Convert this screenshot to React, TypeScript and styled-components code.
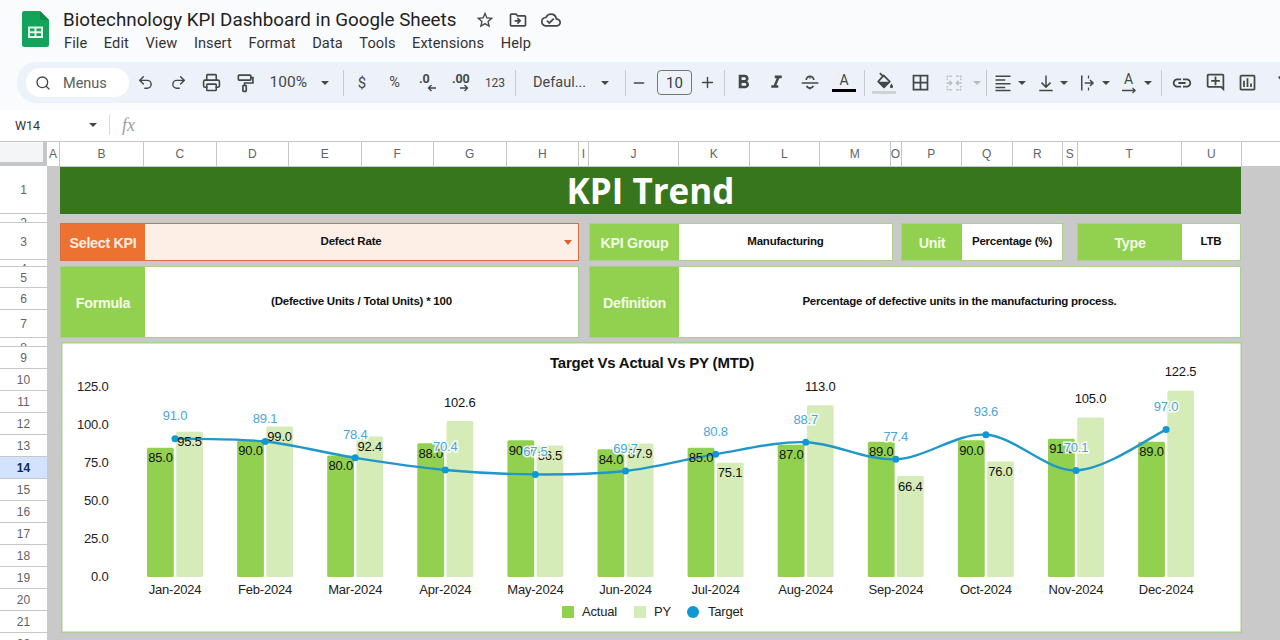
import React from "react";
import styled, { createGlobalStyle } from "styled-components";
import { Undo2, Redo2, Printer, Search, Minus, Plus } from "lucide-react";
import {
  MdStarBorder,
  MdOutlineDriveFileMove,
  MdOutlineCloudDone,
  MdFormatBold,
  MdFormatItalic,
  MdBorderAll,
  MdOutlineAddComment,
  MdOutlineInsertChart,
  MdLink,
  MdOutlineFilterAlt,
} from "react-icons/md";

const UI_FONT = `Roboto, "Liberation Sans", sans-serif`;
const SHEET_FONT = `"Liberation Sans", Arial, sans-serif`;
const ICON = "#444746";

const GlobalStyle = createGlobalStyle`
  html, body { margin: 0; padding: 0; background: #fff; }
  #root { width: 1280px; height: 640px; overflow: hidden; }
`;

const Page = styled.div`
  width: 1280px;
  height: 640px;
  overflow: hidden;
  display: flex;
  flex-direction: column;
  font-family: ${UI_FONT};
  background: #fff;
`;

const Chrome = styled.header`
  height: 110px;
  flex: none;
  background: #f9fbfd;
  display: flex;
  flex-direction: column;
`;

const TitleBar = styled.div`
  height: 62px;
  flex: none;
  display: flex;
  padding-left: 22px;
  box-sizing: border-box;
`;

const Logo = styled.svg`
  width: 27px;
  height: 36px;
  margin-top: 11px;
  flex: none;
`;

const TitleBlock = styled.div`
  margin-left: 14px;
  display: flex;
  flex-direction: column;
`;

const TitleLine = styled.div`
  display: flex;
  align-items: center;
  height: 24px;
  margin-top: 8px;
`;

const DocTitle = styled.span`
  font-size: 18.8px;
  color: #1f1f1f;
  width: 394px;
  white-space: nowrap;
`;

const TitleIcons = styled.div`
  display: flex;
  align-items: center;
  gap: 13px;
  margin-left: 18px;
  color: ${ICON};
`;

const MenuBar = styled.nav`
  display: flex;
  gap: 16.5px;
  height: 22px;
  align-items: center;
  padding-left: 1px;
`;

const MenuItem = styled.span`
  font-size: 14.6px;
  color: #333;
  letter-spacing: 0.1px;
`;

const Toolbar = styled.div`
  margin-left: 17px;
  height: 41px;
  flex: none;
  background: #edf2fa;
  border-radius: 20px 0 0 20px;
  display: flex;
  align-items: center;
  padding-left: 9px;
  overflow: hidden;
  color: ${ICON};
`;

const SearchPill = styled.div`
  width: 103px;
  height: 29px;
  flex: none;
  background: #fff;
  border-radius: 15px;
  display: flex;
  align-items: center;
  padding: 1px 0 0 9px;
  gap: 12px;
  box-sizing: border-box;
  font-size: 14.5px;
  color: #5b5e60;
`;

const ToolButton = styled.div<{ $w: number; $pl?: number; $gap?: number; $off?: boolean }>`
  width: ${(p) => p.$w}px;
  height: 28px;
  flex: none;
  display: flex;
  align-items: center;
  justify-content: ${(p) => (p.$pl !== undefined ? "flex-start" : "center")};
  padding-left: ${(p) => p.$pl ?? 0}px;
  gap: ${(p) => p.$gap ?? 0}px;
  box-sizing: border-box;
  color: ${(p) => (p.$off ? "#b9bcbf" : ICON)};
  font-size: 14px;
`;

const Caret = styled.i<{ $off?: boolean }>`
  flex: none;
  width: 0;
  height: 0;
  border-left: 4px solid transparent;
  border-right: 4px solid transparent;
  border-top: 4px solid ${(p) => (p.$off ? "#b9bcbf" : ICON)};
`;

const ToolSep = styled.span<{ $ml?: number }>`
  flex: none;
  width: 1px;
  height: 26px;
  background: #c7c9cc;
  margin: 0 2px 0 ${(p) => p.$ml ?? 2}px;
`;

const ToolLabel = styled.span<{ $size?: number }>`
  font-size: ${(p) => p.$size ?? 14}px;
  line-height: 1;
  white-space: nowrap;
  padding-top: 1px;
`;

const StackedLabel = styled.span`
  display: flex;
  flex-direction: column;
  align-items: flex-start;
  width: 17px;
  font-size: 12.5px;
  font-weight: 700;
  line-height: 11px;
  letter-spacing: -0.2px;
  height: 20px;
  color: ${ICON};
`;

const TinyArrow = styled.svg`
  width: 9px;
  height: 8px;
  align-self: flex-end;
`;

const SizeBox = styled.div`
  flex: none;
  margin-left: 7px;
  width: 35px;
  height: 25px;
  box-sizing: border-box;
  border: 1px solid #747775;
  border-radius: 4px;
  display: flex;
  align-items: center;
  justify-content: center;
  font-size: 15px;
  color: #3c4043;
`;

const ColorStack = styled.div`
  display: flex;
  flex-direction: column;
  align-items: center;
  width: 24px;
`;

const ColorLetter = styled.span`
  font-size: 14px;
  line-height: 15px;
  color: ${ICON};
`;

const ColorBar = styled.span<{ $c: string }>`
  display: block;
  width: 24px;
  height: 3px;
  background: ${(p) => p.$c};
  margin-top: 1px;
`;

const FormulaBar = styled.div`
  height: 31px;
  flex: none;
  display: flex;
  align-items: center;
  background: #fff;
  box-sizing: border-box;
  padding-bottom: 1px;
`;

const CellRef = styled.span`
  width: 89px;
  padding-left: 15px;
  box-sizing: border-box;
  font-size: 12.5px;
  color: #333;
  flex: none;
`;

const FxSep = styled.span`
  width: 1px;
  height: 20px;
  background: #dadce0;
  margin-left: 12px;
`;

const FxMark = styled.span`
  margin-left: 12px;
  font-family: "Liberation Serif", serif;
  font-style: italic;
  font-size: 18px;
  color: #9aa0a6;
`;

const ColumnRow = styled.div`
  height: 25px;
  flex: none;
  display: flex;
  box-sizing: border-box;
  border-top: 1px solid #c7c7c7;
  background: #fff;
`;

const CornerCell = styled.div`
  width: 47px;
  flex: none;
  box-sizing: border-box;
  background: #f4f5f6;
  border-right: 4px solid #c4c6c8;
  border-bottom: 4px solid #c4c6c8;
`;

const ColumnCell = styled.div<{ $w: number }>`
  width: ${(p) => p.$w}px;
  flex: none;
  box-sizing: border-box;
  border-right: 1px solid #c7c7c7;
  display: flex;
  align-items: center;
  justify-content: center;
  font-size: 12px;
  font-family: ${SHEET_FONT};
  color: #5f6368;
  overflow: hidden;
`;

const SheetBody = styled.main`
  flex: 1;
  min-height: 0;
  display: flex;
`;

const RowRail = styled.div`
  width: 47px;
  flex: none;
  background: #fff;
  overflow: hidden;
  display: flex;
  flex-direction: column;
`;

const RowCell = styled.div<{ $h: number; $active?: boolean; $clip?: number }>`
  height: ${(p) => p.$h}px;
  flex: none;
  box-sizing: border-box;
  border-bottom: 1px solid #c7c7c7;
  display: flex;
  align-items: ${(p) => (p.$clip !== undefined ? "flex-start" : "center")};
  justify-content: center;
  overflow: hidden;
  padding-top: ${(p) => p.$clip ?? 1}px;
  font-size: 12px;
  line-height: 14px;
  font-family: ${SHEET_FONT};
  font-weight: ${(p) => (p.$active ? 700 : 400)};
  color: ${(p) => (p.$active ? "#0b2a5e" : "#5f6368")};
  background: ${(p) => (p.$active ? "#d3e3fd" : "#fff")};
`;

const Canvas = styled.div`
  flex: 1;
  min-width: 0;
  background: #c9c9c9;
  padding: 1px 39px 0 13px;
  box-sizing: border-box;
  font-family: ${SHEET_FONT};
  overflow: hidden;
`;

const Banner = styled.h1`
  margin: 0;
  height: 47px;
  background: #38761d;
  display: flex;
  align-items: center;
  justify-content: center;
  color: #fff;
  font-family: "Open Sans", sans-serif;
  font-size: 35px;
  font-weight: 700;
  line-height: 1;
`;

const FieldRow = styled.div<{ $h: number; $mt: number }>`
  display: flex;
  height: ${(p) => p.$h}px;
  margin-top: ${(p) => p.$mt}px;
`;

const Field = styled.div<{ $w: number; $ml?: number; $accent?: boolean }>`
  width: ${(p) => p.$w}px;
  margin-left: ${(p) => p.$ml ?? 0}px;
  flex: none;
  display: flex;
  box-sizing: border-box;
  border: 1px solid ${(p) => (p.$accent ? "#dc6e3c" : "#a9d08e")};
  background: #fff;
`;

const FieldLabel = styled.div<{ $w: number; $accent?: boolean }>`
  width: ${(p) => p.$w}px;
  flex: none;
  display: flex;
  align-items: center;
  justify-content: center;
  padding-top: 1px;
  box-sizing: border-box;
  background: ${(p) => (p.$accent ? "#ed7130" : "#92d14f")};
  color: ${(p) => (p.$accent ? "#fdeee6" : "#f3fbe8")};
  font-size: 14.3px;
  letter-spacing: -0.3px;
  font-weight: 700;
  white-space: nowrap;
`;

const FieldValue = styled.div<{ $accent?: boolean }>`
  flex: 1;
  min-width: 0;
  position: relative;
  display: flex;
  align-items: center;
  justify-content: center;
  padding-right: ${(p) => (p.$accent ? 21 : 0)}px;
  padding-bottom: 2px;
  box-sizing: border-box;
  background: ${(p) => (p.$accent ? "#fdeee6" : "#fff")};
  color: #111;
  font-size: 11.5px;
  letter-spacing: -0.22px;
  font-weight: 700;
  white-space: nowrap;
`;

const DropArrow = styled.i`
  position: absolute;
  right: 6px;
  top: 16px;
  width: 0;
  height: 0;
  border-left: 4px solid transparent;
  border-right: 4px solid transparent;
  border-top: 5px solid #d8602b;
`;

const ChartPanel = styled.section`
  width: 1181px;
  height: 291px;
  margin: 4px 0 0 1px;
  background: #fff;
  box-shadow: inset 0 0 0 1.5px #a9d08e;
`;

const ChartSvg = styled.svg`
  display: block;
  width: 1181px;
  height: 291px;
`;

const ChartTitle = styled.text`
  font-family: ${SHEET_FONT};
  font-size: 15px;
  letter-spacing: -0.2px;
  font-weight: 700;
  fill: #111;
  text-anchor: middle;
`;

const AxisText = styled.text<{ $anchor?: string }>`
  font-family: ${SHEET_FONT};
  font-size: 13px;
  letter-spacing: -0.2px;
  fill: #222;
  text-anchor: ${(p) => p.$anchor ?? "middle"};
`;

const BarText = styled.text`
  font-family: ${SHEET_FONT};
  font-size: 13px;
  letter-spacing: -0.2px;
  fill: #111;
  text-anchor: middle;
`;

const TargetText = styled.text`
  font-family: ${SHEET_FONT};
  font-size: 13px;
  letter-spacing: -0.2px;
  fill: #4ba6d8;
  text-anchor: middle;
  paint-order: stroke;
  stroke: #fff;
  stroke-width: 3px;
  stroke-opacity: 0.9;
`;

const COLUMNS: [string, number][] = [
  ["A", 13], ["B", 84], ["C", 72.5], ["D", 72.5], ["E", 72.5], ["F", 72.5], ["G", 72.5], ["H", 72.5],
  ["I", 10], ["J", 90], ["K", 70.5], ["L", 70.5], ["M", 70.5], ["O", 11], ["P", 60.5], ["Q", 50.5],
  ["R", 50.5], ["S", 14.5], ["T", 104.5], ["U", 59.5],
];

const ROWS: { name: string; h: number; clip?: number }[] = [
  { name: "1", h: 48 },
  { name: "2", h: 9, clip: 2 },
  { name: "3", h: 37 },
  { name: "4", h: 7, clip: 2 },
  { name: "5", h: 21 },
  { name: "6", h: 22 },
  { name: "7", h: 27.5 },
  { name: "8", h: 9.5, clip: 3 },
  ...Array.from({ length: 14 }, (_, i) => ({ name: String(i + 9), h: 22 })),
];

const MENUS = ["File", "Edit", "View", "Insert", "Format", "Data", "Tools", "Extensions", "Help"];

const MONTHS = ["Jan", "Feb", "Mar", "Apr", "May", "Jun", "Jul", "Aug", "Sep", "Oct", "Nov", "Dec"];
const ACTUAL = [85, 90, 80, 88, 90, 84, 85, 87, 89, 90, 91, 89];
const PY = [95.5, 99, 92.4, 102.6, 86.5, 87.9, 75.1, 113, 66.4, 76, 105, 122.5];
const TARGET = [91, 89.1, 78.4, 70.4, 67.5, 69.7, 80.8, 88.7, 77.4, 93.6, 70.1, 97];
const TICKS = [0, 25, 50, 75, 100, 125];

const BASE_Y = 577;
const UNIT = 1.52;
const cx = (i: number) => 175 + i * 90.1;
const vy = (v: number) => BASE_Y - v * UNIT;

function smoothPath(points: [number, number][]) {
  let d = `M${points[0][0]} ${points[0][1]}`;
  for (let i = 0; i < points.length - 1; i++) {
    const p0 = points[Math.max(i - 1, 0)];
    const p1 = points[i];
    const p2 = points[i + 1];
    const p3 = points[Math.min(i + 2, points.length - 1)];
    const c1x = p1[0] + (p2[0] - p0[0]) / 6;
    const c1y = p1[1] + (p2[1] - p0[1]) / 6;
    const c2x = p2[0] - (p3[0] - p1[0]) / 6;
    const c2y = p2[1] - (p3[1] - p1[1]) / 6;
    d += ` C${c1x} ${c1y} ${c2x} ${c2y} ${p2[0]} ${p2[1]}`;
  }
  return d;
}

const targetPoints = TARGET.map((v, i) => [cx(i), vy(v)] as [number, number]);

function TrendChart() {
  return (
    <ChartSvg viewBox="61 342 1181 291">
      <ChartTitle x={652} y={368}>Target Vs Actual Vs PY (MTD)</ChartTitle>
      {TICKS.map((t) => (
        <AxisText key={t} x={108.5} y={vy(t) + 4.4} $anchor="end">{t.toFixed(1)}</AxisText>
      ))}
      {MONTHS.map((m, i) => (
        <g key={m}>
          <rect x={cx(i) - 28} y={vy(ACTUAL[i])} width={26.8} height={ACTUAL[i] * UNIT} rx={1.5} fill="#92d14f" />
          <rect x={cx(i) + 1.2} y={vy(PY[i])} width={26.8} height={PY[i] * UNIT} rx={1.5} fill="#d5ecb9" />
          <AxisText x={cx(i)} y={594}>{`${m}-2024`}</AxisText>
        </g>
      ))}
      <path d={smoothPath(targetPoints)} fill="none" stroke="#2097c8" strokeWidth={2.4} />
      {targetPoints.map(([x, y], i) => (
        <circle key={i} cx={x} cy={y} r={3.5} fill="#1197d3" />
      ))}
      {MONTHS.map((m, i) => (
        <g key={m}>
          <BarText x={cx(i) - 14.5} y={vy(ACTUAL[i]) + 14.5}>{ACTUAL[i].toFixed(1)}</BarText>
          <BarText x={cx(i) + 14.5} y={PY[i] > 100 ? vy(PY[i]) - 14.5 : vy(PY[i]) + 14.5}>{PY[i].toFixed(1)}</BarText>
        </g>
      ))}
      {targetPoints.map(([x, y], i) => (
        <TargetText key={i} x={x} y={y - 18.5}>{TARGET[i].toFixed(1)}</TargetText>
      ))}
      <rect x={562} y={606} width={12} height={12} rx={1} fill="#92d14f" />
      <AxisText x={582} y={616} $anchor="start">Actual</AxisText>
      <rect x={634} y={606} width={12} height={12} rx={1} fill="#d5ecb9" />
      <AxisText x={654} y={616} $anchor="start">PY</AxisText>
      <circle cx={693} cy={612} r={6} fill="#1197d3" />
      <AxisText x={708} y={616} $anchor="start">Target</AxisText>
    </ChartSvg>
  );
}

const Stroke = { fill: "none", stroke: "currentColor", strokeWidth: 2 } as const;

function RollerIcon() {
  return (
    <svg width="20" height="20" viewBox="0 0 24 24" {...Stroke}>
      <rect x="4" y="2.5" width="15" height="6" rx="1" />
      <path d="M19 5.5h2.5V12H11.5v3" />
      <rect x="9.5" y="15" width="4" height="7" rx="0.6" />
    </svg>
  );
}

function StrikeIcon() {
  return (
    <svg width="20" height="20" viewBox="0 0 24 24" {...Stroke}>
      <path d="M2 12h20" />
      <path d="M7.5 8.5a4.5 4.5 0 0 1 9 0" />
      <path d="M8 15.5a4.3 4.3 0 0 0 8 0" />
      <path d="M12 4v3M12 17v3" strokeWidth={1.2} />
    </svg>
  );
}

function FillIcon() {
  return (
    <svg width="20" height="18" viewBox="0 0 24 21">
      <path d="M7 1l4.5 4.5" fill="none" stroke="currentColor" strokeWidth={2} />
      <path d="M11.5 3.8 19 11.3 12 18.300 5 11.300z" fill="none" stroke="currentColor" strokeWidth={2} strokeLinejoin="round" />
      <path d="M5 11.300h14L12 18.300z" fill="currentColor" />
      <path d="M21 13.500c1 1.500 1.900 2.700 1.900 3.700a1.900 1.900 0 0 1-3.800 0c0-1 .9-2.200 1.900-3.700z" fill="currentColor" />
    </svg>
  );
}

function MergeIcon() {
  return (
    <svg width="18" height="18" viewBox="0 0 24 24" {...Stroke} strokeWidth={1.8}>
      <path d="M9 3H3v5M15 3h6v5M9 21H3v-5M15 21h6v-5" strokeDasharray="3 1.5" />
      <path d="M2 12h7M6 9l3 3-3 3M22 12h-7M18 9l-3 3 3 3" />
    </svg>
  );
}

function AlignIcon() {
  return (
    <svg width="18" height="18" viewBox="0 0 24 24" {...Stroke}>
      <path d="M2 3h20M2 8h13M2 13h20M2 18h13M2 22h20" />
    </svg>
  );
}

function ValignIcon() {
  return (
    <svg width="18" height="18" viewBox="0 0 24 24" {...Stroke}>
      <path d="M12 2v15M6 11.5l6 6 6-6M3 22h18" />
    </svg>
  );
}

function WrapIcon() {
  return (
    <svg width="18" height="18" viewBox="0 0 24 24" {...Stroke}>
      <path d="M5 2v20" />
      <path d="M14 2v4M14 18v4" strokeWidth={1.6} />
      <path d="M9 12h11M16 8l4 4-4 4" />
    </svg>
  );
}

function ArrowUnder() {
  return (
    <svg width="16" height="7" viewBox="0 0 18 8" {...Stroke} strokeWidth={1.5}>
      <path d="M1 4h15M13 1l3 3-3 3" />
    </svg>
  );
}

const Sheets = () => (
  <Logo viewBox="0 0 27 36">
    <path d="M3 0h15l9 9v24.5a2.5 2.5 0 0 1-2.5 2.5h-22A2.5 2.5 0 0 1 0 33.5v-31A2.5 2.5 0 0 1 3 0z" fill="#14a35a" />
    <path d="M18 0l9 9h-7a2 2 0 0 1-2-2z" fill="#0f8a4b" />
    <path d="M6 15.5h15v11.5H6z M8 17.5v2.800h4.500v-2.800z M14.500 17.500v2.800H19v-2.800z M8 22.200v2.800h4.500v-2.800z M14.500 22.200v2.800H19v-2.800z" fill="#e6f5ec" fillRule="evenodd" />
  </Logo>
);

export default function App() {
  return (
    <Page>
      <GlobalStyle />
      <Chrome>
        <TitleBar>
          <Sheets />
          <TitleBlock>
            <TitleLine>
              <DocTitle>Biotechnology KPI Dashboard in Google Sheets</DocTitle>
              <TitleIcons>
                <MdStarBorder size={20} />
                <MdOutlineDriveFileMove size={20} />
                <MdOutlineCloudDone size={20} />
              </TitleIcons>
            </TitleLine>
            <MenuBar>
              {MENUS.map((m) => (
                <MenuItem key={m}>{m}</MenuItem>
              ))}
            </MenuBar>
          </TitleBlock>
        </TitleBar>
        <Toolbar>
          <SearchPill>
            <Search size={16} strokeWidth={2} color={ICON} />
            Menus
          </SearchPill>
          <ToolButton $w={33}><Undo2 size={17} strokeWidth={2} /></ToolButton>
          <ToolButton $w={33}><Redo2 size={17} strokeWidth={2} /></ToolButton>
          <ToolButton $w={33}><Printer size={19} strokeWidth={2} /></ToolButton>
          <ToolButton $w={33}><RollerIcon /></ToolButton>
          <ToolButton $w={80} $pl={8.5} $gap={14}>
            <ToolLabel $size={15.5}>100%</ToolLabel>
            <Caret />
          </ToolButton>
          <ToolSep />
          <ToolButton $w={32}><ToolLabel $size={15}>$</ToolLabel></ToolButton>
          <ToolButton $w={33}><ToolLabel $size={14.5}>%</ToolLabel></ToolButton>
          <ToolButton $w={33}>
            <StackedLabel>
              .0
              <TinyArrow viewBox="0 0 9 8" {...Stroke} strokeWidth={1.4}>
                <path d="M9 4H1.5M4.5 1 1.5 4l3 3" />
              </TinyArrow>
            </StackedLabel>
          </ToolButton>
          <ToolButton $w={33}>
            <StackedLabel>
              .00
              <TinyArrow viewBox="0 0 9 8" {...Stroke} strokeWidth={1.4}>
                <path d="M0 4h7.5M4.5 1l3 3-3 3" />
              </TinyArrow>
            </StackedLabel>
          </ToolButton>
          <ToolButton $w={36}><ToolLabel $size={12}>123</ToolLabel></ToolButton>
          <ToolSep />
          <ToolButton $w={105} $pl={15} $gap={15}>
            <ToolLabel $size={14.5}>Defaul...</ToolLabel>
            <Caret />
          </ToolButton>
          <ToolSep />
          <ToolButton $w={22}><Minus size={16} strokeWidth={2} /></ToolButton>
          <SizeBox>10</SizeBox>
          <ToolButton $w={30}><Plus size={17} strokeWidth={2} /></ToolButton>
          <ToolSep />
          <ToolButton $w={32}><MdFormatBold size={23} /></ToolButton>
          <ToolButton $w={34}><MdFormatItalic size={21} /></ToolButton>
          <ToolButton $w={33}><StrikeIcon /></ToolButton>
          <ToolButton $w={36}>
            <ColorStack>
              <ColorLetter>A</ColorLetter>
              <ColorBar $c="#000" />
            </ColorStack>
          </ToolButton>
          <ToolSep />
          <ToolButton $w={34}>
            <ColorStack>
              <FillIcon />
              <ColorBar $c="#cfd1d2" />
            </ColorStack>
          </ToolButton>
          <ToolButton $w={38}><MdBorderAll size={21} /></ToolButton>
          <ToolButton $w={30} $off><MergeIcon /></ToolButton>
          <ToolButton $w={15} $off><Caret $off /></ToolButton>
          <ToolSep />
          <ToolButton $w={37} $pl={5} $gap={6}><AlignIcon /><Caret /></ToolButton>
          <ToolButton $w={42} $pl={11} $gap={5}><ValignIcon /><Caret /></ToolButton>
          <ToolButton $w={42} $pl={10} $gap={6}><WrapIcon /><Caret /></ToolButton>
          <ToolButton $w={42} $pl={8} $gap={5}>
            <ColorStack>
              <ColorLetter>A</ColorLetter>
              <ArrowUnder />
            </ColorStack>
            <Caret />
          </ToolButton>
          <ToolSep $ml={9} />
          <ToolButton $w={35}><MdLink size={22} /></ToolButton>
          <ToolButton $w={32}><MdOutlineAddComment size={21} /></ToolButton>
          <ToolButton $w={33}><MdOutlineInsertChart size={21} /></ToolButton>
          <ToolButton $w={33} $pl={11}><MdOutlineFilterAlt size={20} /></ToolButton>
        </Toolbar>
      </Chrome>
      <FormulaBar>
        <CellRef>W14</CellRef>
        <Caret />
        <FxSep />
        <FxMark>fx</FxMark>
      </FormulaBar>
      <ColumnRow>
        <CornerCell />
        {COLUMNS.map(([name, w]) => (
          <ColumnCell key={name} $w={w}>{name}</ColumnCell>
        ))}
      </ColumnRow>
      <SheetBody>
        <RowRail>
          {ROWS.map((r) => (
            <RowCell key={r.name} $h={r.h} $clip={r.clip} $active={r.name === "14"}>{r.name}</RowCell>
          ))}
        </RowRail>
        <Canvas>
          <Banner>KPI Trend</Banner>
          <FieldRow $h={38} $mt={9}>
            <Field $w={519} $accent>
              <FieldLabel $w={84} $accent>Select KPI</FieldLabel>
              <FieldValue $accent>
                Defect Rate
                <DropArrow />
              </FieldValue>
            </Field>
            <Field $w={304} $ml={10}>
              <FieldLabel $w={89}>KPI Group</FieldLabel>
              <FieldValue>Manufacturing</FieldValue>
            </Field>
            <Field $w={162} $ml={8}>
              <FieldLabel $w={60}>Unit</FieldLabel>
              <FieldValue>Percentage (%)</FieldValue>
            </Field>
            <Field $w={164} $ml={14}>
              <FieldLabel $w={104}>Type</FieldLabel>
              <FieldValue>LTB</FieldValue>
            </Field>
          </FieldRow>
          <FieldRow $h={72} $mt={5}>
            <Field $w={519}>
              <FieldLabel $w={84}>Formula</FieldLabel>
              <FieldValue>(Defective Units / Total Units) * 100</FieldValue>
            </Field>
            <Field $w={652} $ml={10}>
              <FieldLabel $w={89}>Definition</FieldLabel>
              <FieldValue>Percentage of defective units in the manufacturing process.</FieldValue>
            </Field>
          </FieldRow>
          <ChartPanel>
            <TrendChart />
          </ChartPanel>
        </Canvas>
      </SheetBody>
    </Page>
  );
}
